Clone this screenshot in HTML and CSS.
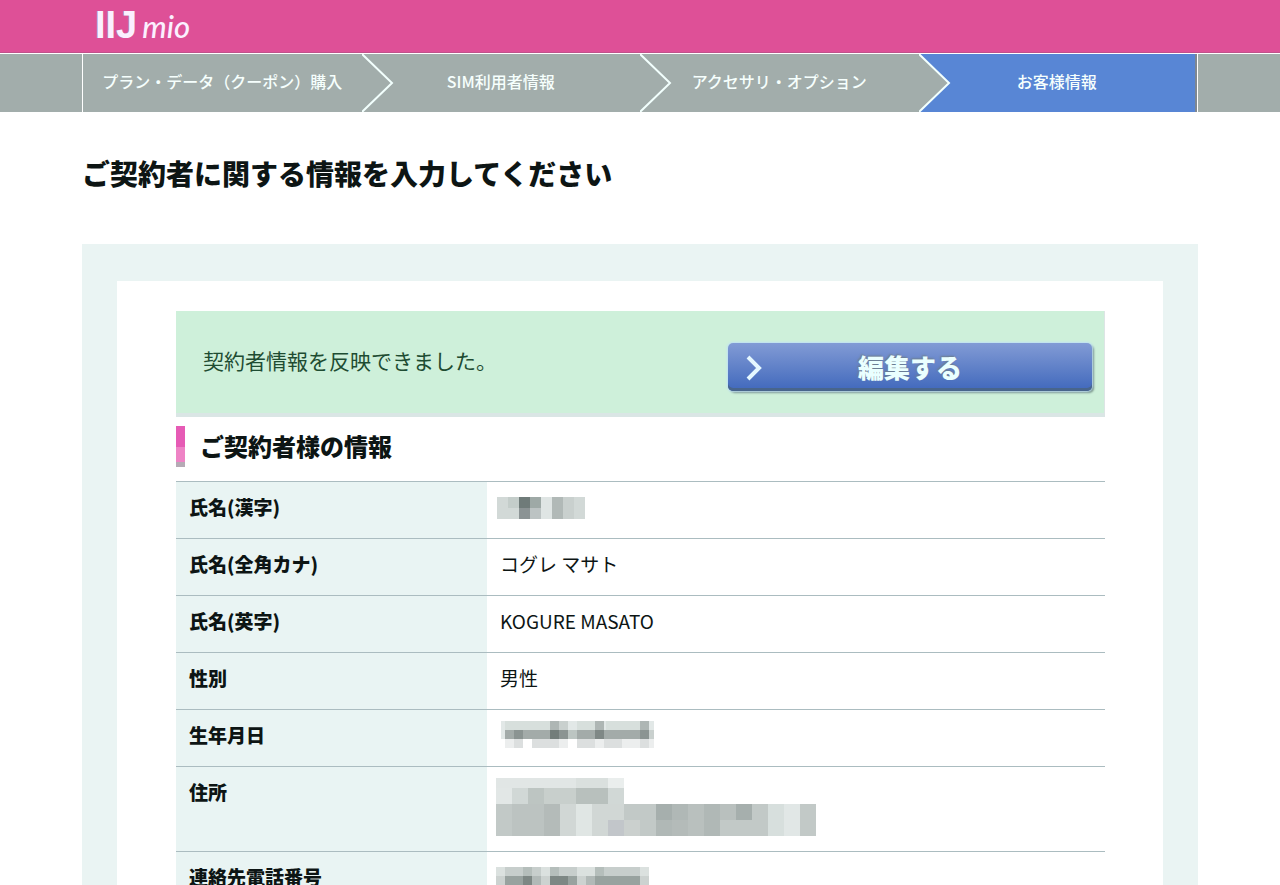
FILE: index.html
```html
<!DOCTYPE html>
<html lang="ja">
<head>
<meta charset="utf-8">
<meta name="viewport" content="width=device-width, initial-scale=1">
<title>IIJmio お客様情報</title>
<link rel="stylesheet" href="styles.css">
</head>
<body>
<header class="header">
  <div class="container logo"><span class="logo-main">IIJ</span><span class="logo-sub">mio</span></div>
</header>
<nav class="progress">
  <ol class="container steps">
    <li class="step">プラン・データ（クーポン）購入</li>
    <li class="step"><svg class="arrow" viewBox="0 0 32 58"><path class="arrow-line" d="M0 0L30 29L0 58"/></svg>SIM利用者情報</li>
    <li class="step"><svg class="arrow" viewBox="0 0 32 58"><path class="arrow-line" d="M0 0L30 29L0 58"/></svg>アクセサリ・オプション</li>
    <li class="step current" aria-current="step"><svg class="arrow" viewBox="0 0 32 58"><path class="arrow-fill" d="M0 0L30 29L0 58z"/><path class="arrow-line" d="M0 0L30 29L0 58"/></svg>お客様情報</li>
  </ol>
</nav>
<main class="container">
  <h1 class="title">ご契約者に関する情報を入力してください</h1>
  <div class="panel">
    <div class="sheet">
      <div class="notice">
        <p class="notice-text">契約者情報を反映できました。</p>
        <button class="edit" type="button"><svg class="edit-icon" viewBox="0 0 18 26"><path d="M3 2L14 13L3 24"/></svg>編集する</button>
      </div>
      <h2 class="subtitle">ご契約者様の情報</h2>
      <table class="info">
        <tr><th scope="row">氏名(漢字)</th><td class="masked">
          <svg class="mosaic" width="90" height="28" viewBox="0 0 90 28" role="img" aria-label="非表示">
            <path fill="#d2d9d7" d="M1 4h88v22H1z"/><path fill="#c4cdca" d="M12 4h11v11H12z"/><path fill="#6f7b79" d="M23 4h11v11H23z"/><path fill="#8b9394" d="M23 15h11v11H23z"/><path fill="#9ea9a6" d="M34 4h11v11H34z"/><path fill="#bcc3c3" d="M34 15h11v11H34z"/><path fill="#dfe5e4" d="M45 4h11v22H45z"/><path fill="#b1b9b7" d="M56 4h11v22H56z"/><path fill="#c9d0ce" d="M67 4h11v22H67z"/>
          </svg></td></tr>
        <tr><th scope="row">氏名(全角カナ)</th><td>コグレ マサト</td></tr>
        <tr><th scope="row">氏名(英字)</th><td>KOGURE MASATO</td></tr>
        <tr><th scope="row">性別</th><td>男性</td></tr>
        <tr><th scope="row">生年月日</th><td class="masked">
          <svg class="mosaic" width="160" height="28" viewBox="0 0 160 28" role="img" aria-label="非表示">
            <path fill="#e2e8e7" d="M5 0h153v18H5z"/><path fill="#d7dfdc" d="M9 0h45v9H9zM81 0h20v9H81zM110 0h39v9h-39z"/><path fill="#aeb6b4" d="M54 0h9v9h-9zM99 0h9v9h-9zM144 0h9v9h-9z"/><path fill="#c9d0ce" d="M63 0h9v9h-9zM153 9h5v9h-5z"/>
            <path fill="#a3aba9" d="M9 9h144v9H9z"/><path fill="#8b9492" d="M18 9h9v9h-9zM63 9h9v9h-9zM144 9h9v9h-9z"/><path fill="#737d7a" d="M54 9h9v9h-9z"/><path fill="#7f8886" d="M99 9h9v9h-9z"/><path fill="#bcc5c2" d="M72 9h9v9h-9z"/>
            <path fill="#eceeee" d="M9 18h149v9H9z"/><path fill="#fff" d="M27 18h9v9h-9zM72 18h9v9h-9z"/><path fill="#dcdfdf" d="M18 18h9v9h-9zM36 18h27v9H36zM81 18h18v9H81zM108 18h18v9h-18zM144 18h9v9h-9z"/>
          </svg></td></tr>
        <tr><th scope="row">住所</th><td class="masked">
          <svg class="mosaic" width="320" height="56" viewBox="0 0 320 56" role="img" aria-label="非表示">
            <path fill="#e1e6e5" d="M0 0h112v10H0z"/><path fill="#dae0de" d="M80 0h32v10H80z"/><path fill="#eaeeed" d="M112 0h16v10h-16z"/>
            <path fill="#e2e7e6" d="M0 10h16v16H0z"/><path fill="#d1d8d6" d="M16 10h112v16H16z"/><path fill="#bdc5c2" d="M32 10h16v16H32z"/><path fill="#c8cfcc" d="M48 10h32v16H48z"/><path fill="#b8c0bd" d="M80 10h32v16H80z"/>
            <path fill="#c2c9c7" d="M0 26h320v32H0z"/><path fill="#bcc3c1" d="M16 26h48v32H16z"/><path fill="#b4bbb9" d="M48 26h16v32H48zM176 42h16v16h-16z"/><path fill="#d1d7d5" d="M64 26h64v32H64z"/><path fill="#e0e6e4" d="M80 26h16v32H80z"/><path fill="#c2c6ca" d="M112 42h16v16h-16z"/><path fill="#cbd0ce" d="M128 42h16v16h-16z"/><path fill="#a6afad" d="M160 26h16v16h-16zM240 26h16v16h-16z"/><path fill="#b0b8b6" d="M160 42h16v16h-16zM176 26h16v16h-16zM208 26h16v32h-16z"/><path fill="#b9c0be" d="M192 26h16v32h-16zM224 26h16v16h-16z"/><path fill="#d7dfdd" d="M272 26h16v32h-16z"/><path fill="#e1e7e6" d="M288 26h16v32h-16z"/>
          </svg></td></tr>
        <tr><th scope="row">連絡先電話番号</th><td class="masked">
          <svg class="mosaic" width="160" height="28" viewBox="0 0 160 28" role="img" aria-label="非表示">
            <path fill="#c7cecc" d="M0 4h153v9H0z"/><path fill="#dbe1df" d="M0 4h9v9H0zM45 4h9v9h-9zM81 4h18v9H81zM144 4h9v9h-9z"/><path fill="#b5bebb" d="M27 4h9v9h-9zM54 4h9v9h-9zM99 4h9v9h-9z"/>
            <path fill="#98a29f" d="M0 13h144v14H0z"/><path fill="#ccd2d0" d="M0 13h9v14H0zM45 13h9v14h-9zM81 13h9v14h-9zM144 13h9v14h-9z"/><path fill="#7d8784" d="M27 13h9v14h-9zM54 13h18v14H54z"/><path fill="#b1b9b7" d="M36 13h9v14h-9zM90 13h9v14h-9z"/>
          </svg></td></tr>
      </table>
    </div>
  </div>
</main>
</body>
</html>
```
FILE: styles.css
```css
* {
  box-sizing: border-box;
}

body {
  margin: 0;
  background: #fff;
  color: #0d1514;
  font-family: "Noto Sans CJK JP", sans-serif;
  font-size: 19px;
  line-height: 28px;
}

.container {
  width: 88%;
  max-width: 1116px;
  margin: 0 auto;
}

.header {
  background: #de5097;
  border-bottom: 1px solid #c0508b;
}

.logo {
  display: flex;
  align-items: baseline;
  gap: 5px;
  height: 52px;
  padding-left: 13px;
  color: #fbf0ff;
}

.logo-main {
  font: 700 38px/50px "Liberation Sans", sans-serif;
  text-shadow: -1px 0 #a8779d;
}

.logo-sub {
  font: italic 500 31px/50px Lato, sans-serif;
}

.progress {
  margin-top: 1px;
  background: #a2adab;
}

.steps {
  display: grid;
  grid-template-columns: repeat(4, 1fr);
  padding: 0;
  border: solid #fff;
  border-width: 0 1px;
  list-style: none;
}

.step {
  position: relative;
  padding: 13px 0 17px;
  color: #f6fffd;
  font-size: 16px;
  font-weight: 500;
  text-align: center;
}

.current {
  background: #5886d5;
  border-right: 2px solid #7e8792;
}

.arrow {
  position: absolute;
  top: 0;
  left: 0;
  width: 32px;
  height: 58px;
}

.arrow-line {
  fill: none;
  stroke: #f2fffd;
  stroke-width: 2;
}

.arrow-fill {
  fill: #a2adab;
}

.title {
  margin: 39px 0 49px;
  font-size: 28px;
  font-weight: 900;
  line-height: 44px;
}

.panel {
  padding: 37px 35px;
  background: #eaf4f3;
}

.sheet {
  padding: 30px 58px 30px 59px;
  background: #fff;
}

.notice {
  display: flex;
  align-items: center;
  justify-content: space-between;
  padding: 32px 12px 22px 27px;
  background: #cef0da;
  border-right: 1px solid #dde5e5;
  border-bottom: 4px solid #dae6e5;
}

.notice-text {
  margin: 0 0 14px;
  color: #1e4c32;
  font-size: 21px;
}

.edit {
  position: relative;
  width: 364px;
  height: 48px;
  padding: 0;
  border: 0;
  border-radius: 5px;
  background: linear-gradient(#829bd5, #4068bc);
  box-shadow: inset 0 -3px #48658c, 0 0 2px 1px #bfe0f5, 2px 2px 2px #718b80;
  color: #eaffff;
  font: 900 26px/44px "Noto Sans CJK JP", sans-serif;
  text-shadow: -1px -1px 2px #6d7d88;
}

.edit-icon {
  position: absolute;
  top: 12px;
  left: 17px;
  width: 18px;
  height: 26px;
  fill: none;
  stroke: #e5f8ff;
  stroke-width: 4;
}

.subtitle {
  margin: 9px 0 14px;
  padding: 0 0 2px 15px;
  border-left: 9px solid;
  border-image: linear-gradient(#e65bb5 50%, #ee83c5 50%, #ee83c5 85%, #b5aab5 85%) 1;
  font-size: 24px;
  font-weight: 900;
  line-height: 39px;
}

.info {
  width: 100%;
  border-collapse: collapse;
}

.info th,
.info td {
  padding: 11px 13px 17px;
  border-top: 1px solid #abbcc0;
  text-align: left;
  vertical-align: top;
}

.info th {
  width: 311px;
  background: #e9f4f3;
  font-weight: 900;
}

.info .masked {
  padding-left: 9px;
}

.mosaic {
  display: block;
  overflow: visible;
  shape-rendering: crispEdges;
}
```
